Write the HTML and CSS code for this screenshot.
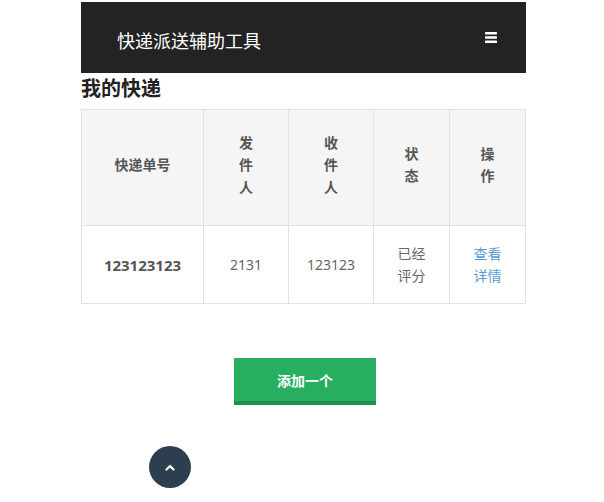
FILE: index.html
```html
<!DOCTYPE html>
<html lang="zh">
<head>
<meta charset="utf-8">
<title>快递派送辅助工具</title>
<link rel="stylesheet" href="styles.css">
</head>
<body>
<div class="page">
  <header class="navbar">
    <span class="brand">快递派送辅助工具</span>
    <span class="menu">
      <svg width="12" height="11" viewBox="0 0 12 11"><rect x="0" y="0" width="12" height="2.4" rx="0.6" fill="#fff"/><rect x="0" y="4.3" width="12" height="2.4" rx="0.6" fill="#fff"/><rect x="0" y="8.6" width="12" height="2.4" rx="0.6" fill="#fff"/></svg>
    </span>
  </header>
  <h2 class="title">我的快递</h2>
  <table class="list">
    <thead>
      <tr>
        <th class="c1">快递单号</th>
        <th class="c2">发<br>件<br>人</th>
        <th class="c3">收<br>件<br>人</th>
        <th class="c4">状<br>态</th>
        <th class="c5">操<br>作</th>
      </tr>
    </thead>
    <tbody>
      <tr>
        <td class="num">123123123</td>
        <td>2131</td>
        <td>123123</td>
        <td>已经<br>评分</td>
        <td><a class="link" href="#">查看<br>详情</a></td>
      </tr>
    </tbody>
  </table>
  <div class="actions">
    <a class="btn" href="#">添加一个</a>
  </div>
  <div class="totop-row">
    <a class="totop" href="#">
      <svg width="10" height="7" viewBox="0 0 10 7"><path d="M1.5 5.5 L5 2 L8.5 5.5" fill="none" stroke="#fff" stroke-width="2.2" stroke-linecap="round" stroke-linejoin="round"/></svg>
    </a>
  </div>
</div>
</body>
</html>
```
FILE: styles.css
```css
html, body {
  margin: 0;
  padding: 0;
  background: #fff;
}
body {
  font-family: "Noto Sans", "Noto Sans CJK SC", sans-serif;
  color: #333;
}
.page {
  width: 445px;
  margin: 2px 0 0 81px;
}
.navbar {
  height: 71px;
  background: #232323;
  display: flex;
  align-items: center;
  justify-content: space-between;
  padding: 0 29px 0 36px;
  box-sizing: border-box;
}
.brand {
  color: #fff;
  font-size: 18px;
  font-family: "Noto Sans CJK SC", sans-serif;
  margin-top: 4px;
}
.menu {
  display: flex;
  margin-top: 0;
}
.title {
  margin: 3px 0 9px;
  font-size: 20px;
  line-height: 24px;
  font-weight: bold;
  color: #222;
  font-family: "Noto Sans CJK SC", sans-serif;
}
.list {
  width: 445px;
  border-collapse: collapse;
  border: 1px solid #d9d9d9;
  table-layout: fixed;
  font-family: "Noto Sans", "Noto Sans CJK SC", sans-serif;
}
.list th, .list td {
  border: 1px solid #e2e2e2;
  text-align: center;
  vertical-align: middle;
}
.list th {
  background: #f5f5f5;
  height: 107px;
  padding: 0 0 8px;
  font-size: 14px;
  line-height: 22px;
  font-weight: bold;
  color: #555;
  font-family: "Noto Sans CJK SC", sans-serif;
}
.c1 { width: 121px; }
.c2 { width: 84px; }
.c3 { width: 84px; }
.c4 { width: 75px; }
.list td {
  height: 77px;
  padding: 0;
  font-size: 14px;
  line-height: 22px;
  color: #666;
}
.list td.num {
  font-weight: bold;
  font-size: 15px;
  color: #555;
}
.link {
  color: #5b9bd5;
  text-decoration: none;
}
.actions {
  display: flex;
  justify-content: center;
  margin-top: 54px;
  padding-left: 3px;
}
.btn {
  width: 142px;
  height: 43px;
  border-bottom: 4px solid #1f8f4d;
  background: #27ae60;
  color: #fff;
  font-size: 14px;
  font-weight: bold;
  font-family: "Noto Sans CJK SC", sans-serif;
  text-decoration: none;
  display: flex;
  align-items: center;
  justify-content: center;
}
.totop-row {
  margin-top: 41px;
  padding-left: 68px;
}
.totop {
  width: 42px;
  height: 42px;
  border-radius: 50%;
  background: #2c3e50;
  display: flex;
  align-items: center;
  justify-content: center;
}
```
